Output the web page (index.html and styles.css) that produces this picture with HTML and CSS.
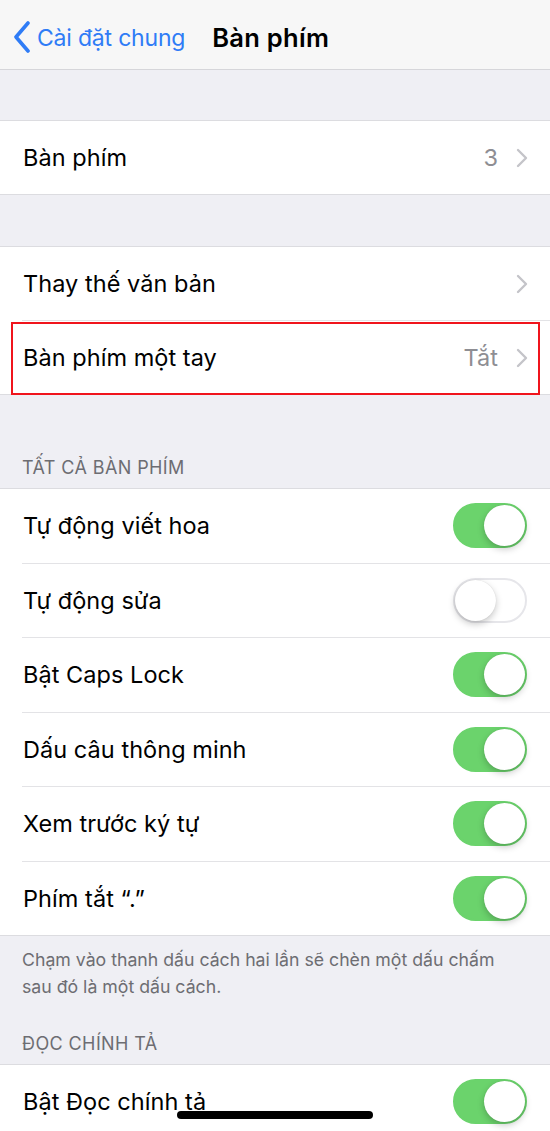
FILE: index.html
```html
<!DOCTYPE html>
<html lang="vi">
<head>
  <meta charset="UTF-8">
  <title>Bàn phím</title>
  <link rel="stylesheet" href="styles.css">
</head>
<body class="settings-page">
  <div class="navbar">
    <a class="back" href="#">
      <svg class="back-icon" width="18" height="32" viewBox="0 0 18 32">
        <path d="M15 2 L3 16 L15 30" fill="none" stroke="#2f7cf6" stroke-width="3.6" stroke-linecap="round" stroke-linejoin="round"/>
      </svg>
      <span>Cài đặt chung</span>
    </a>
    <div class="title">Bàn phím</div>
  </div>

  <div class="gap gap-top"></div>

  <div class="group">
    <div class="row">
      <span class="label">Bàn phím</span>
      <span class="value">3</span>
      <svg class="chevron" width="12" height="20" viewBox="0 0 12 20"><path d="M2 2 L10 10 L2 18" fill="none" stroke="#c4c4c9" stroke-width="2.4" stroke-linecap="round" stroke-linejoin="round"/></svg>
    </div>
  </div>

  <div class="gap"></div>

  <div class="group">
    <div class="row">
      <span class="label">Thay thế văn bản</span>
      <svg class="chevron" width="12" height="20" viewBox="0 0 12 20"><path d="M2 2 L10 10 L2 18" fill="none" stroke="#c4c4c9" stroke-width="2.4" stroke-linecap="round" stroke-linejoin="round"/></svg>
    </div>
    <div class="row marked">
      <span class="label">Bàn phím một tay</span>
      <span class="value">Tắt</span>
      <svg class="chevron" width="12" height="20" viewBox="0 0 12 20"><path d="M2 2 L10 10 L2 18" fill="none" stroke="#c4c4c9" stroke-width="2.4" stroke-linecap="round" stroke-linejoin="round"/></svg>
      <span class="highlight"></span>
    </div>
  </div>

  <div class="section-header">TẤT CẢ BÀN PHÍM</div>

  <div class="group">
    <div class="row toggle-row"><span class="label">Tự động viết hoa</span><span class="switch on"></span></div>
    <div class="row toggle-row"><span class="label">Tự động sửa</span><span class="switch"></span></div>
    <div class="row toggle-row"><span class="label">Bật Caps Lock</span><span class="switch on"></span></div>
    <div class="row toggle-row"><span class="label">Dấu câu thông minh</span><span class="switch on"></span></div>
    <div class="row toggle-row"><span class="label">Xem trước ký tự</span><span class="switch on"></span></div>
    <div class="row toggle-row"><span class="label">Phím tắt “.”</span><span class="switch on"></span></div>
  </div>

  <div class="section-footer">Chạm vào thanh dấu cách hai lần sẽ chèn một dấu chấm sau đó là một dấu cách.</div>

  <div class="section-header small">ĐỌC CHÍNH TẢ</div>

  <div class="group">
    <div class="row toggle-row"><span class="label">Bật Đọc chính tả</span><span class="switch on"></span></div>
  </div>

  <div class="home-indicator"></div>
</body>
</html>
```

FILE: styles.css
```css
body.settings-page {
  margin: 0;
  height: 1131px;
  overflow: hidden;
  background: #efeff4;
  font-family: Inter, "Noto Sans", sans-serif;
  color: #000;
  position: relative;
}

.navbar {
  height: 70px;
  background: #f7f7f7;
  border-bottom: 1px solid #d6d6da;
  display: flex;
  align-items: center;
  padding: 6px 0 0 13px;
  box-sizing: border-box;
}

.back {
  display: flex;
  align-items: center;
  gap: 6px;
  color: #2f7cf6;
  text-decoration: none;
  font-size: 23px;
  letter-spacing: -0.2px;
}

.back-icon {
  margin-top: -2px;
}

.title {
  margin-left: 27px;
  font-size: 25.5px;
  font-weight: 600;
  letter-spacing: 0.3px;
}

.gap {
  height: 51px;
}

.gap-top {
  height: 50px;
}

.group {
  background: #fff;
  border-top: 1px solid #dcdce0;
  border-bottom: 1px solid #dcdce0;
}

.row {
  position: relative;
  height: 73px;
  display: flex;
  align-items: center;
  padding: 0 22px 0 23px;
  font-size: 23.5px;
  letter-spacing: 0.05px;
}

.row + .row {
  border-top: 1px solid #e3e3e6;
  margin-left: 22px;
  padding-left: 1px;
}

.toggle-row {
  height: 73.5px;
}

.label {
  flex: 1;
}

.value {
  color: #8e8e93;
  margin-right: 18px;
}

.highlight {
  position: absolute;
  left: 11px;
  right: 10px;
  top: 1px;
  bottom: -1px;
  border: 2px solid #f0141c;
}

.row + .row .highlight {
  left: -11px;
}

.section-header {
  height: 93px;
  box-sizing: border-box;
  display: flex;
  align-items: flex-end;
  padding: 0 22px 10px;
  font-size: 18px;
  color: #6d6d72;
  letter-spacing: 0.4px;
}

.section-header.small {
  height: 64px;
}

.section-footer {
  padding: 10px 22px 0;
  font-size: 17.7px;
  line-height: 27px;
  color: #6d6d72;
}

.switch {
  position: relative;
  width: 74px;
  height: 45px;
  border-radius: 23px;
  box-sizing: border-box;
  border: 2px solid #e6e6ea;
  background: #fff;
  margin-right: 1px;
}

.switch::after {
  content: "";
  position: absolute;
  top: 0;
  left: 0;
  width: 41px;
  height: 41px;
  border-radius: 50%;
  background: #fff;
  box-shadow: 0 3px 7px rgba(0, 0, 0, 0.22), 0 0 1px rgba(0, 0, 0, 0.15);
}

.switch.on {
  background: #6bd36c;
  border-color: #6bd36c;
}

.switch.on::after {
  left: 29px;
}

.home-indicator {
  position: absolute;
  left: 177px;
  bottom: 12px;
  width: 196px;
  height: 8px;
  border-radius: 4px;
  background: #000;
}
```
